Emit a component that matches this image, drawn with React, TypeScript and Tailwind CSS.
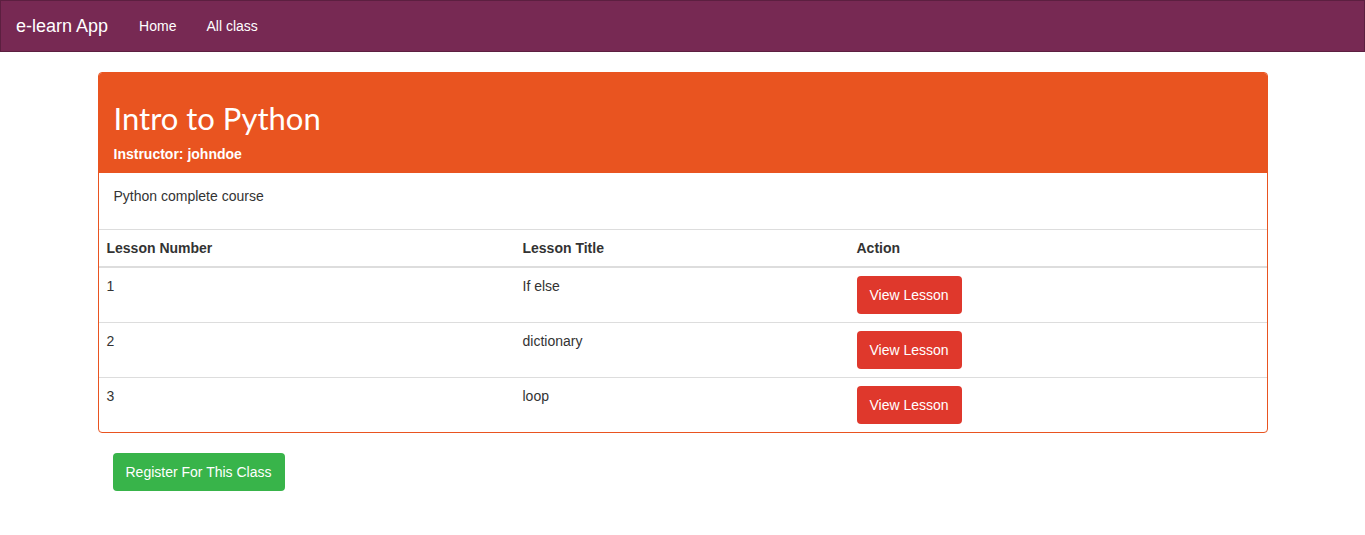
import React from "react";

const lessons = [
  { n: "1", title: "If else" },
  { n: "2", title: "dictionary" },
  { n: "3", title: "loop" },
];

export default function App() {
  return (
    <div className="min-h-[535px] bg-white text-[14px] leading-[20px] text-[#333333]" style={{ fontFamily: '"Liberation Sans", Arial, sans-serif' }}>
      <nav className="flex h-[52px] items-center border border-[#5c1f40] bg-[#772953]">
        <a className="pl-[15px] pr-[16px] text-[18px] leading-[20px] text-white">e-learn App</a>
        <a className="px-[15px] text-white">Home</a>
        <a className="px-[15px] text-white">All class</a>
      </nav>
      <div className="mx-auto w-[1170px] pt-[20px]">
        <div className="overflow-hidden rounded-[4px] border border-[#e95420]">
          <div className="bg-[#e95420] px-[15px] pt-[29px] pb-[9px] text-white">
            <h2 className="text-[31px] leading-[33px] font-normal" style={{ fontFamily: 'Lato, "Open Sans", sans-serif' }}>Intro to Python</h2>
            <div className="mt-[9px] font-bold">Instructor: johndoe</div>
          </div>
          <div className="px-[15px] pt-[13px] pb-[23px]">Python complete course</div>
          <table className="w-full border-collapse">
            <thead>
              <tr className="border-t border-b-2 border-t-[#dddddd] border-b-[#dddddd]">
                <th className="w-[416px] p-[8px] text-left font-bold">Lesson Number</th>
                <th className="w-[334px] p-[8px] text-left font-bold">Lesson Title</th>
                <th className="p-[8px] text-left font-bold">Action</th>
              </tr>
            </thead>
            <tbody>
              {lessons.map((l, i) => (
                <tr key={l.n} className={i > 0 ? "border-t border-[#dddddd]" : ""}>
                  <td className="p-[8px] align-top">{l.n}</td>
                  <td className="p-[8px] align-top">{l.title}</td>
                  <td className="p-[8px] align-top">
                    <button className="h-[38px] rounded-[4px] bg-[#df382c] px-[13px] text-white">View Lesson</button>
                  </td>
                </tr>
              ))}
            </tbody>
          </table>
        </div>
        <div className="px-[15px] pt-[20px]">
          <button className="h-[38px] rounded-[4px] bg-[#38b44a] px-[13px] text-white">Register For This Class</button>
        </div>
      </div>
    </div>
  );
}
